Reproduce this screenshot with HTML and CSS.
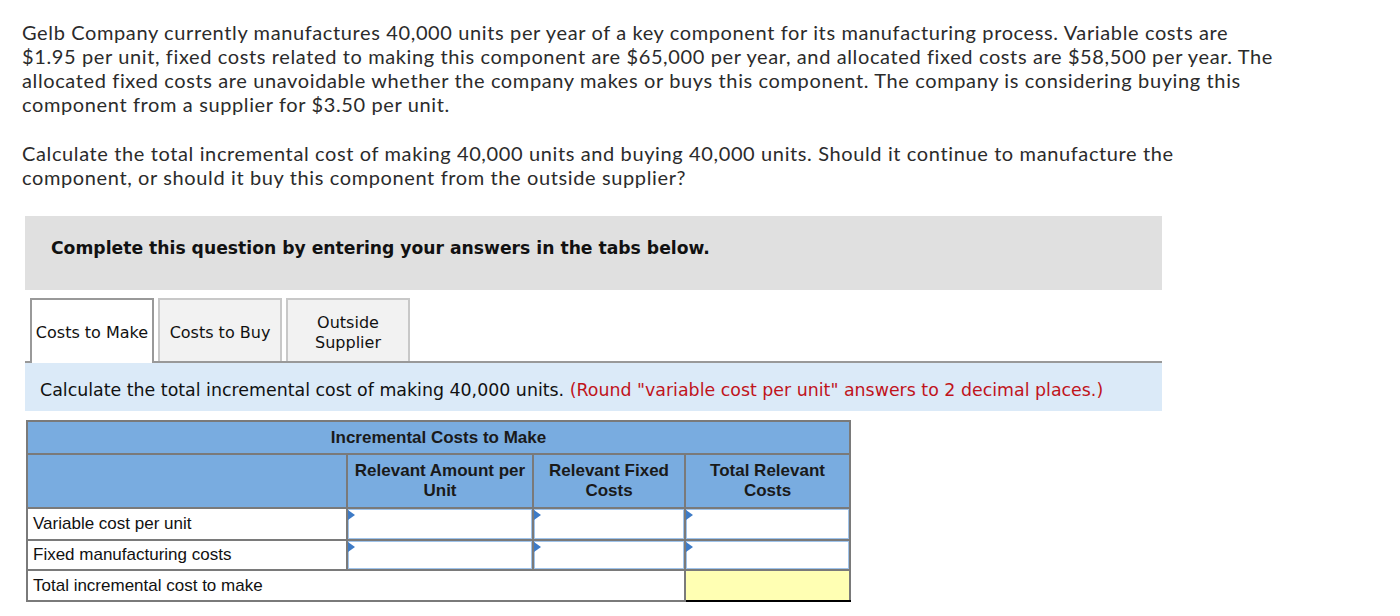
FILE: index.html
```html
<!DOCTYPE html>
<html lang="en">
<head>
<meta charset="utf-8">
<title>Make or Buy</title>
<link rel="stylesheet" href="styles.css">
</head>
<body>
<div class="page">
  <div class="question">
    <p class="q-text">Gelb Company currently manufactures 40,000 units per year of a key component for its manufacturing process. Variable costs are<br>$1.95 per unit, fixed costs related to making this component are $65,000 per year, and allocated fixed costs are $58,500 per year. The<br>allocated fixed costs are unavoidable whether the company makes or buys this component. The company is considering buying this<br>component from a supplier for $3.50 per unit.</p>
    <p class="q-text q-second">Calculate the total incremental cost of making 40,000 units and buying 40,000 units. Should it continue to manufacture the<br>component, or should it buy this component from the outside supplier?</p>
  </div>

  <div class="panel">
    <div class="banner">Complete this question by entering your answers in the tabs below.</div>

    <div class="tabs">
      <div class="tab active">Costs to Make</div>
      <div class="tab">Costs to Buy</div>
      <div class="tab">Outside<br>Supplier</div>
    </div>

    <div class="instruction">Calculate the total incremental cost of making 40,000 units. <span class="hint">(Round "variable cost per unit" answers to 2 decimal places.)</span></div>

    <table class="grid">
      <colgroup>
        <col class="c1">
        <col class="c2">
        <col class="c3">
        <col class="c4">
      </colgroup>
      <thead>
        <tr class="title-row">
          <th colspan="4">Incremental Costs to Make</th>
        </tr>
        <tr class="head-row">
          <th></th>
          <th>Relevant Amount per<br>Unit</th>
          <th>Relevant Fixed<br>Costs</th>
          <th>Total Relevant<br>Costs</th>
        </tr>
      </thead>
      <tbody>
        <tr class="data-row">
          <td class="label">Variable cost per unit</td>
          <td class="entry"><div class="field"><input type="text"></div></td>
          <td class="entry"><div class="field"><input type="text"></div></td>
          <td class="entry"><div class="field"><input type="text"></div></td>
        </tr>
        <tr class="data-row row-short">
          <td class="label">Fixed manufacturing costs</td>
          <td class="entry"><div class="field"><input type="text"></div></td>
          <td class="entry"><div class="field"><input type="text"></div></td>
          <td class="entry"><div class="field"><input type="text"></div></td>
        </tr>
        <tr class="data-row total-row">
          <td class="label" colspan="3">Total incremental cost to make</td>
          <td class="total"></td>
        </tr>
      </tbody>
    </table>
  </div>
</div>
</body>
</html>
```

FILE: styles.css
```css
html, body {
  margin: 0;
  padding: 0;
  background: #ffffff;
}

.page {
  padding: 20px 0 0 22px;
}

.question {
  width: 1340px;
}

.q-text {
  margin: 0;
  font-family: "Lato", "Open Sans", sans-serif;
  font-size: 20px;
  letter-spacing: 0.62px;
  line-height: 24px;
  color: #2b2b2b;
  white-space: nowrap;
}

.q-second {
  margin-top: 25px;
}

.panel {
  margin: 27px 0 0 3px;
  width: 1137px;
}

.banner {
  background: #e0e0e0;
  padding: 23px 26px 33px;
  font-family: "DejaVu Sans", Verdana, sans-serif;
  font-weight: bold;
  font-size: 17.2px;
  line-height: 18px;
  color: #111111;
}

.tabs {
  display: flex;
  gap: 4px;
  margin-top: 8px;
  padding-left: 5px;
  height: 63px;
  border-bottom: 2px solid #999999;
}

.tab {
  box-sizing: border-box;
  width: 124px;
  height: 63px;
  padding-top: 4px;
  border: 2px solid #c8c8c8;
  border-bottom: none;
  background: #f2f2f2;
  display: flex;
  align-items: center;
  justify-content: center;
  text-align: center;
  font-family: "DejaVu Sans", Verdana, sans-serif;
  font-size: 16px;
  line-height: 20px;
  color: #111111;
}

.tab.active {
  height: 65px;
  border-color: #999999;
  background: #ffffff;
  padding-bottom: 2px;
}

.instruction {
  background: #dbeaf8;
  height: 48px;
  box-sizing: border-box;
  padding: 16px 15px 0;
  font-family: "DejaVu Sans", Verdana, sans-serif;
  font-size: 17.4px;
  line-height: 22px;
  color: #111111;
}

.hint {
  color: #c0141c;
}

.grid {
  margin: 9px 0 0 1px;
  border-collapse: collapse;
  table-layout: fixed;
  width: 825px;
  font-family: "Liberation Sans", Arial, sans-serif;
  font-size: 17px;
  color: #111111;
}

.c1 { width: 320px; }
.c2 { width: 186px; }
.c3 { width: 152px; }
.c4 { width: 165px; }

.grid th,
.grid td {
  border: 2px solid #7a7a7a;
  padding: 0;
}

.grid th {
  background: #79ace0;
  font-weight: bold;
  text-align: center;
  line-height: 20px;
  color: #1a1a1a;
}

.title-row th {
  height: 31px;
}

.head-row th {
  height: 52px;
}

.data-row td {
  height: 30px;
  background: #ffffff;
}

.row-short td {
  height: 28px;
}

.total-row td {
  height: 29px;
}

.label {
  padding-left: 5px !important;
  line-height: 20px;
}

.entry .field {
  position: relative;
}

.entry .field::before {
  content: "";
  position: absolute;
  left: 0;
  top: 1px;
  width: 0;
  height: 0;
  border-top: 5px solid transparent;
  border-bottom: 5px solid transparent;
  border-left: 7px solid #3e7bc6;
}

.entry input {
  display: block;
  box-sizing: border-box;
  width: 100%;
  height: 30px;
  margin: 0;
  border: 1px solid #9fc3ea;
  padding: 0 4px;
  background: #ffffff;
  font-family: "Liberation Sans", Arial, sans-serif;
  font-size: 16px;
  outline: none;
}

.row-short .entry input {
  height: 28px;
}

.total {
  background: #ffffb3 !important;
  border-bottom-color: #000000 !important;
}
```
